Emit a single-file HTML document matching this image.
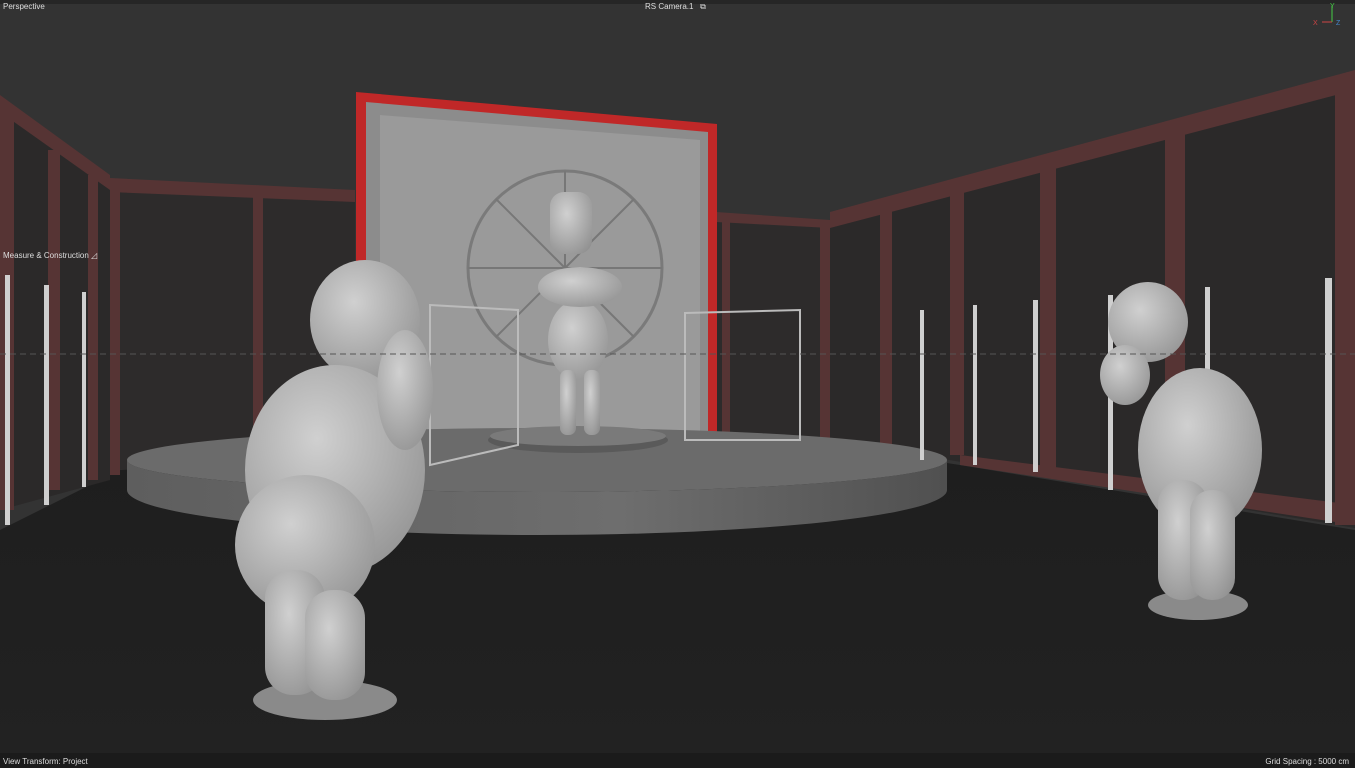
<!DOCTYPE html>
<html><head><meta charset="utf-8"><style>
html,body{margin:0;padding:0;background:#333;}
#v{position:relative;width:1355px;height:768px;overflow:hidden;font-family:"Liberation Sans",sans-serif;}
.t{position:absolute;color:#ddd;font-size:8px;}
</style></head><body><div id="v">
<svg width="1355" height="768" style="position:absolute;left:0;top:0">
<defs>
<linearGradient id="fl" x1="0" y1="0" x2="0" y2="1"><stop offset="0" stop-color="#1e1e1e"/><stop offset="1" stop-color="#222"/></linearGradient>
<radialGradient id="fig" cx="0.4" cy="0.35" r="0.8"><stop offset="0" stop-color="#d0d0d0"/><stop offset="1" stop-color="#8e8e8e"/></radialGradient>
<linearGradient id="side" x1="0" y1="0" x2="1" y2="0"><stop offset="0" stop-color="#5e5e5e"/><stop offset="0.6" stop-color="#6e6e6e"/><stop offset="1" stop-color="#505050"/></linearGradient>
</defs>
<rect width="1355" height="768" fill="#333"/>
<rect width="1355" height="4" fill="#262626"/>
<!-- floor -->
<polygon points="0,530 120,470 355,455 830,445 960,465 1355,530 1355,768 0,768" fill="url(#fl)"/>
<!-- back walls glass -->
<polygon points="115,185 355,200 355,455 115,470" fill="#2d2b2b"/>
<polygon points="716,215 830,222 830,440 716,440" fill="#2d2b2b"/>
<polygon points="830,220 1355,80 1355,528 830,440" fill="#2b2929"/>
<polygon points="0,100 110,180 110,480 0,510" fill="#2b2929"/>
<!-- frames -->
<g fill="#563434">
<polygon points="110,178 355,190 355,202 110,192"/>
<polygon points="716,212 830,220 830,228 716,222"/>
<polygon points="830,212 1355,70 1355,90 830,228"/>
<polygon points="0,95 110,175 110,190 0,112"/>
<rect x="253" y="195" width="10" height="265"/>
<rect x="110" y="185" width="10" height="290"/>
<rect x="0" y="110" width="14" height="400"/>
<rect x="48" y="150" width="12" height="340"/>
<rect x="88" y="175" width="10" height="305"/>
<rect x="722" y="218" width="8" height="222"/>
<rect x="820" y="222" width="10" height="220"/>
<rect x="880" y="205" width="12" height="240"/>
<rect x="950" y="185" width="14" height="270"/>
<rect x="1040" y="160" width="16" height="310"/>
<rect x="1165" y="125" width="20" height="365"/>
<rect x="1335" y="80" width="20" height="445"/>
<polygon points="960,455 1355,505 1355,525 960,465"/>
</g>
<!-- red panel -->
<polygon points="356,92 717,124 717,442 356,442" fill="#c02828"/>
<polygon points="366,102 708,132 708,440 366,440" fill="#8c8c8c"/>
<polygon points="380,115 700,140 700,440 380,440" fill="#9a9a9a"/>
<circle cx="565" cy="268" r="97" fill="none" stroke="#7a7a7a" stroke-width="3"/>
<g stroke="#777" stroke-width="2">
<line x1="565" y1="268" x2="565" y2="171"/><line x1="565" y1="268" x2="662" y2="268"/><line x1="565" y1="268" x2="468" y2="268"/>
<line x1="565" y1="268" x2="634" y2="199"/><line x1="565" y1="268" x2="496" y2="199"/><line x1="565" y1="268" x2="634" y2="337"/><line x1="565" y1="268" x2="496" y2="337"/>
</g>
<!-- platform -->
<path d="M127,460 A410,32 0 0 0 947,460 L947,490 A410,45 0 0 1 127,490 Z" fill="url(#side)"/>
<ellipse cx="537" cy="460" rx="410" ry="32" fill="#6b6b6b"/>
<ellipse cx="578" cy="440" rx="90" ry="13" fill="#5a5a5a"/>
<ellipse cx="578" cy="436" rx="88" ry="10" fill="#7a7a7a"/>
<!-- wire frames -->
<g fill="none" stroke="#bbb" stroke-width="2">
<polygon points="430,305 518,310 518,445 430,465"/>
<polygon points="685,313 800,310 800,440 685,440"/>
</g>
<!-- white posts -->
<g fill="#cfcfcf">
<rect x="5" y="275" width="5" height="250"/><rect x="44" y="285" width="5" height="220"/><rect x="82" y="292" width="4" height="195"/>
<rect x="920" y="310" width="4" height="150"/><rect x="973" y="305" width="4" height="160"/><rect x="1033" y="300" width="5" height="172"/>
<rect x="1108" y="295" width="5" height="195"/><rect x="1205" y="287" width="5" height="210"/><rect x="1325" y="278" width="7" height="245"/>
</g>
<!-- center figure -->
<g fill="url(#fig)">
<rect x="550" y="192" width="42" height="62" rx="14"/>
<ellipse cx="578" cy="340" rx="30" ry="40"/>
<ellipse cx="580" cy="287" rx="42" ry="20"/>
<rect x="560" y="370" width="16" height="65" rx="7"/>
<rect x="584" y="370" width="16" height="65" rx="7"/>
</g>
<!-- left figure -->
<g fill="url(#fig)">
<ellipse cx="325" cy="700" rx="72" ry="20" fill="#8a8a8a"/>
<ellipse cx="365" cy="320" rx="55" ry="60"/>
<ellipse cx="335" cy="470" rx="90" ry="105"/>
<ellipse cx="305" cy="545" rx="70" ry="70"/>
<rect x="265" y="570" width="60" height="125" rx="28"/>
<rect x="305" y="590" width="60" height="110" rx="28"/>
<ellipse cx="405" cy="390" rx="28" ry="60"/>
</g>
<!-- right figure -->
<g fill="url(#fig)">
<ellipse cx="1198" cy="605" rx="50" ry="15" fill="#8a8a8a"/>
<ellipse cx="1148" cy="322" rx="40" ry="40"/>
<ellipse cx="1200" cy="450" rx="62" ry="82"/>
<rect x="1158" y="480" width="50" height="120" rx="24"/>
<rect x="1190" y="490" width="45" height="110" rx="22"/>
<ellipse cx="1125" cy="375" rx="25" ry="30"/>
</g>
<line x1="0" y1="354" x2="1355" y2="354" stroke="#555" stroke-dasharray="6,4" stroke-width="1"/>
<rect y="753" width="1355" height="15" fill="#1b1b1b"/>
<!-- axis -->
<line x1="1332" y1="6" x2="1332" y2="22" stroke="#4c4"/><line x1="1332" y1="22" x2="1322" y2="22" stroke="#c44"/><text x="1330" y="8" fill="#4c4" font-size="7">Y</text><text x="1313" y="25" fill="#c44" font-size="7">X</text><text x="1336" y="25" fill="#48c" font-size="7">Z</text>
</svg>
<div class="t" style="left:3px;top:2px">Perspective</div>
<div class="t" style="left:645px;top:2px">RS Camera.1 &nbsp;&nbsp;⧉</div>
<div class="t" style="left:3px;top:251px">Measure &amp; Construction ◿</div>
<div class="t" style="left:3px;top:757px">View Transform: Project</div>
<div class="t" style="right:6px;top:757px">Grid Spacing : 5000 cm</div>
</div></body></html>
